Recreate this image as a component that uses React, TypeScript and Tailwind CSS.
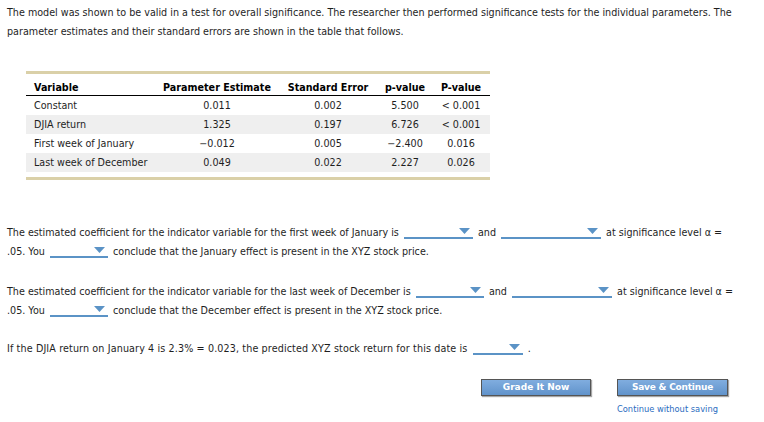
// === External ===-===-===-===-===-===-===-===-===-===-===-===-===-===-===-===
import { FunctionComponent } from "react";

// === Types    ===-===-===-===-===-===-===-===-===-===-===-===-===-===-===-===
type TRow = {
	variable: string;
	estimate: string;
	stdError: string;
	tValue: string;
	pValue: string;
	shaded: boolean;
};

type TDropProps = {
	width: string;
};

// === Data ===-===-===-===-===-===-===-===-===-===-===-===-===-===-===-===-===
const rows: TRow[] = [
	{ variable: "Constant", estimate: "0.011", stdError: "0.002", tValue: "5.500", pValue: "< 0.001", shaded: false },
	{ variable: "DJIA return", estimate: "1.325", stdError: "0.197", tValue: "6.726", pValue: "< 0.001", shaded: true },
	{ variable: "First week of January", estimate: "\u22120.012", stdError: "0.005", tValue: "\u22122.400", pValue: "0.016", shaded: false },
	{ variable: "Last week of December", estimate: "0.049", stdError: "0.022", tValue: "2.227", pValue: "0.026", shaded: true },
];

// === Parts ===-===-===-===-===-===-===-===-===-===-===-===-===-===-===-===-===
const Drop: FunctionComponent<TDropProps> = ({ width }) => (
	<span
		className={`relative mx-[2px] inline-block h-[12px] align-[-3px] border-b-2 border-[#5b93c6] ${width}`}
	>
		<svg
			className="absolute right-[3px] top-[1px]"
			height="6"
			viewBox="0 0 11 6"
			width="11"
		>
			<polygon fill="#5b93c6" points="0,0 11,0 5.5,6" />
		</svg>
	</span>
);

// === Main ===-===-===-===-===-===-===-===-===-===-===-===-===-===-===-===-===
const App = () => {
	return (
		<div
			className="w-[764px] h-[422px] bg-white text-[9.6px] leading-[19px] text-[#1e1e1e] pl-[7px] pr-[8px]"
			style={{ fontFamily: '"DejaVu Sans", Verdana, sans-serif' }}
		>
			<p className="pt-[3px]">
				The model was shown to be valid in a test for overall significance. The
				researcher then performed significance tests for the individual
				parameters. The
				<br />
				parameter estimates and their standard errors are shown in the table
				that follows.
			</p>

			{/* table */}
			<div className="ml-[19px] mt-[30px] w-[464px] border-t-[3px] border-b-[3px] border-[#dad0a8] pb-[5px]">
				<table className="w-full border-collapse">
					<thead>
						<tr className="h-[21px] border-b border-black font-bold text-black">
							<th className="w-[130px] p-0 pl-[8px] pb-[1px] text-left align-bottom leading-[12px]">Variable</th>
							<th className="w-[122px] p-0 pb-[1px] text-center align-bottom leading-[12px]">Parameter Estimate</th>
							<th className="w-[100px] p-0 pb-[1px] text-center align-bottom leading-[12px]">Standard Error</th>
							<th className="w-[54px] p-0 pb-[1px] text-center align-bottom leading-[12px]">p-value</th>
							<th className="w-[58px] p-0 pb-[1px] text-center align-bottom leading-[12px]">P-value</th>
						</tr>
					</thead>
					<tbody>
						{rows.map((r) => (
							<tr
								className={r.shaded ? "h-[19px] bg-[#efefef]" : "h-[19px]"}
								key={r.variable}
							>
								<td className="p-0 pl-[8px] text-left leading-[19px]">{r.variable}</td>
								<td className="p-0 text-center leading-[19px]">{r.estimate}</td>
								<td className="p-0 text-center leading-[19px]">{r.stdError}</td>
								<td className="p-0 text-center leading-[19px]">{r.tValue}</td>
								<td className="p-0 text-center leading-[19px]">{r.pValue}</td>
							</tr>
						))}
					</tbody>
				</table>
			</div>

			{/* questions */}
			<p className="mt-[43px]">
				The estimated coefficient for the indicator variable for the first week
				of January is <Drop width="w-[69px]" /> and <Drop width="w-[100px]" /> at
				significance level α =
				<br />
				.05. You <Drop width="w-[58px]" /> conclude that the January effect is
				present in the XYZ stock price.
			</p>

			<p className="mt-[21px]">
				The estimated coefficient for the indicator variable for the last week
				of December is <Drop width="w-[68px]" /> and <Drop width="w-[100px]" /> at
				significance level α =
				<br />
				.05. You <Drop width="w-[58px]" /> conclude that the December effect is
				present in the XYZ stock price.
			</p>

			<p className="mt-[19px] tracking-[0.12px]">
				If the DJIA return on January 4 is 2.3% = 0.023, the predicted XYZ stock
				return for this date is <Drop width="w-[50px]" /> .
			</p>

			{/* actions */}
			<div className="mt-[21px] flex gap-[26px] pl-[474px]">
				<button
					className="h-[17px] w-[110px] border border-[#555] bg-gradient-to-b from-[#80addf] to-[#6193cb] text-white font-bold text-[9px] leading-[15px]"
					style={{ boxShadow: "1px 1px 1px rgba(0, 0, 0, 0.35)" }}
					type="button"
				>
					Grade It Now
				</button>
				<div className="flex flex-col">
					<button
						className="h-[17px] w-[111px] border border-[#555] bg-gradient-to-b from-[#80addf] to-[#6193cb] text-white font-bold text-[9px] leading-[15px] tracking-[-0.2px]"
						style={{ boxShadow: "1px 1px 1px rgba(0, 0, 0, 0.35)" }}
						type="button"
					>
						Save &amp; Continue
					</button>
					<a className="mt-[5px] text-[#2a6cc0] text-[8.3px] leading-[17px]" href="#">
						Continue without saving
					</a>
				</div>
			</div>
		</div>
	);
};

export default App;
